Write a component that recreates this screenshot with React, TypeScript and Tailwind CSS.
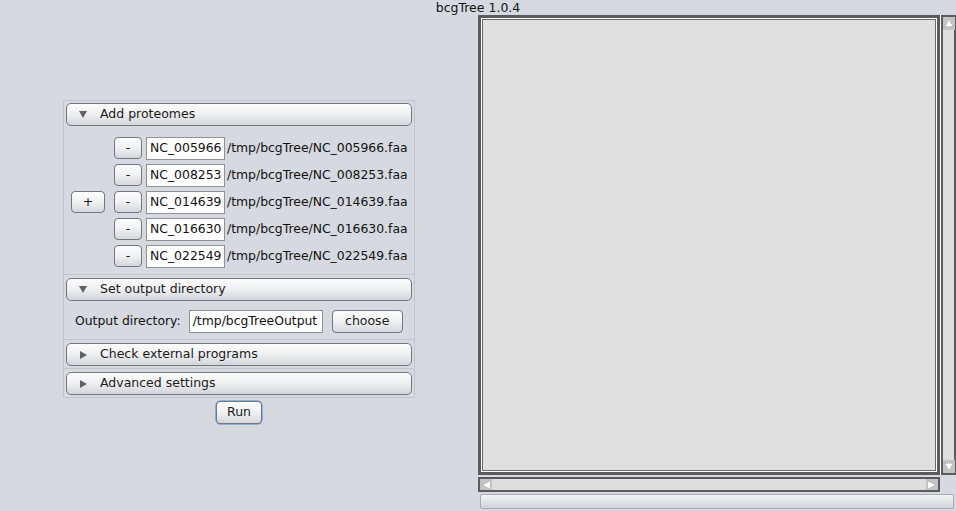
import React from "react"

const rows = [
  { id: "NC_005966", path: "/tmp/bcgTree/NC_005966.faa" },
  { id: "NC_008253", path: "/tmp/bcgTree/NC_008253.faa" },
  { id: "NC_014639", path: "/tmp/bcgTree/NC_014639.faa" },
  { id: "NC_016630", path: "/tmp/bcgTree/NC_016630.faa" },
  { id: "NC_022549", path: "/tmp/bcgTree/NC_022549.faa" },
]

function Tri({ open }: { open: boolean }) {
  return open ? (
    <svg width="8" height="7" viewBox="0 0 8 7" className="shrink-0">
      <path d="M0 0 L8 0 L4 7 Z" fill="#5e6268" />
    </svg>
  ) : (
    <svg width="7" height="8" viewBox="0 0 7 8" className="shrink-0">
      <path d="M0 0 L7 4 L0 8 Z" fill="#5e6268" />
    </svg>
  )
}

function Header({ title, open }: { title: string; open: boolean }) {
  return (
    <div className="h-[23px] flex items-center rounded-[5px] border border-[#73777e] bg-gradient-to-b from-[#fdfdfd] via-[#eeeff1] to-[#d3d5d9] pl-[12px] text-[12.5px] text-[#1a1a1a]">
      <div className="w-[8px] flex justify-center">
        <Tri open={open} />
      </div>
      <span className="ml-[13px]">{title}</span>
    </div>
  )
}

function Btn({ children, className = "" }: { children: React.ReactNode; className?: string }) {
  return (
    <div
      className={
        "h-[22px] flex items-center justify-center rounded-[4px] border border-[#73777e] bg-gradient-to-b from-[#fdfdfd] via-[#f0f1f3] to-[#d5d7db] text-[12.5px] text-[#1a1a1a] " +
        className
      }
    >
      {children}
    </div>
  )
}

function Field({ value, className = "" }: { value: string; className?: string }) {
  return (
    <div className={"h-[23px] flex items-center border border-[#8e9196] bg-white px-[3px] text-[12.4px] text-[#111] whitespace-nowrap overflow-hidden " + className}>
      {value}
    </div>
  )
}

function ArrowBox({ dir }: { dir: "up" | "down" }) {
  const d = dir === "up" ? "M2 10 L6.5 2 L11 10 Z" : "M2 3 L6.5 11 L11 3 Z"
  return (
    <div className="w-[12px] h-[13px] bg-[#c4c4c4] flex items-center justify-center">
      <svg width="12" height="13" viewBox="0 0 13 13">
        <path d={d} fill="#ffffff" stroke="#8a8a8a" strokeWidth="0.8" strokeDasharray="1 1" />
      </svg>
    </div>
  )
}

export default function App() {
  return (
    <div
      className="w-[956px] h-[511px] bg-[#d6d9df] flex flex-col overflow-hidden"
      style={{ fontFamily: '"DejaVu Sans", Verdana, sans-serif' }}
    >
      <div className="h-[15px] flex justify-center items-start text-[12.5px] leading-[15px] text-[#111]">
        bcgTree 1.0.4
      </div>
      <div className="flex flex-1">
        {/* left */}
        <div className="w-[478px] flex flex-col items-center justify-center pb-[1px]">
          <div className="w-[352px] border border-[#c2c5ca] flex flex-col">
            <div className="px-[2px] pt-[2px] border-b border-[#c2c5ca]">
              <Header title="Add proteomes" open />
              <div className="flex items-center pt-[11px] pb-[7px] pl-[5px]">
                <Btn className="w-[34px]">+</Btn>
                <div className="flex flex-col gap-[5px] ml-[9px]">
                  {rows.map((r) => (
                    <div key={r.id} className="flex items-center h-[22px]">
                      <Btn className="w-[28px]">-</Btn>
                      <Field value={r.id} className="ml-[4px] w-[79px]" />
                      <span className="ml-[2px] text-[12.4px] text-[#111] whitespace-nowrap">{r.path}</span>
                    </div>
                  ))}
                </div>
              </div>
            </div>
            <div className="px-[2px] pt-[3px] border-b border-[#c2c5ca]">
              <Header title="Set output directory" open />
              <div className="flex items-center pt-[9px] pb-[6px] pl-[9px]">
                <span className="text-[12.4px] text-[#111]">Output directory:</span>
                <Field value="/tmp/bcgTreeOutput" className="ml-[8px] w-[134px]" />
                <Btn className="ml-[9px] w-[71px] h-[23px]">choose</Btn>
              </div>
            </div>
            <div className="px-[2px] pt-[3px] pb-[2px] border-b border-[#c2c5ca]">
              <Header title="Check external programs" open={false} />
            </div>
            <div className="px-[2px] pt-[3px] pb-[2px]">
              <Header title="Advanced settings" open={false} />
            </div>
          </div>
          <div className="mt-[2px] rounded-[6px] p-[1px] bg-[#8cafd6]">
            <Btn className="w-[46px] h-[23px] border-[#4a6f99]">Run</Btn>
          </div>
        </div>
        {/* right */}
        <div className="w-[478px] flex flex-col">
          <div className="flex h-[460px]">
            <div className="flex-1 border-[3px] border-[#5b5b5b] p-[1px] bg-white">
              <div className="w-full h-full border border-[#6a6a6a] bg-[#dfdfdf]" />
            </div>
            <div className="w-[16px] pl-[1px] bg-white">
              <div className="h-full border-2 border-[#5b5b5b] bg-[#dedede] flex flex-col justify-between">
                <ArrowBox dir="up" />
                <ArrowBox dir="down" />
              </div>
            </div>
          </div>
          <div className="flex mt-[2px] h-[15px]">
            <div className="w-[462px] border-2 border-[#5b5b5b] bg-[#dedede] flex justify-between items-center">
              <div className="w-[12px] h-[11px] bg-[#c4c4c4] flex items-center justify-center">
                <svg width="10" height="10" viewBox="0 0 10 10">
                  <path d="M9 1 L1 5 L9 9" fill="#fff" stroke="#8a8a8a" strokeWidth="0.8" strokeDasharray="1 1" />
                </svg>
              </div>
              <div className="w-[12px] h-[11px] bg-[#c4c4c4] flex items-center justify-center">
                <svg width="10" height="10" viewBox="0 0 10 10">
                  <path d="M1 1 L9 5 L1 9" fill="#fff" stroke="#8a8a8a" strokeWidth="0.8" strokeDasharray="1 1" />
                </svg>
              </div>
            </div>
          </div>
          <div className="mt-[2px] ml-[2px] w-[474px] h-[15px] border border-[#a7aab0] rounded-[2px] bg-gradient-to-b from-[#f4f4f5] via-[#e3e4e6] to-[#d2d4d8]" />
        </div>
      </div>
    </div>
  )
}
